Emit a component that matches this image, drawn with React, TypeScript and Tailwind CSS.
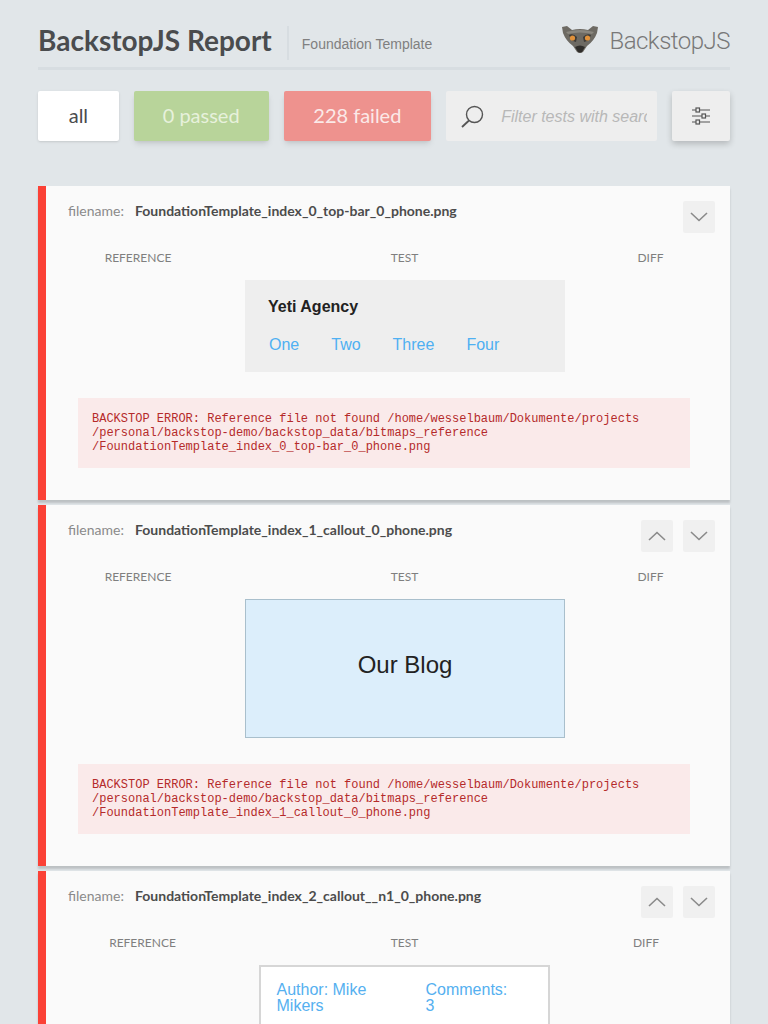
const lato = "font-['Lato','Noto_Sans',sans-serif]"

function Chevron({ up }: { up?: boolean }) {
  return (
    <svg width="18" height="10" viewBox="0 0 18 10" fill="none" stroke="#8a8a8a" strokeWidth="1.6">
      <path d={up ? "M1 9 L9 1.5 L17 9" : "M1 1 L9 8.5 L17 1"} />
    </svg>
  )
}

function NavButtons({ up }: { up?: boolean }) {
  return (
    <div className="flex gap-[10px]">
      {up && (
        <div className="flex h-[32px] w-[32px] items-center justify-center rounded-[2px] bg-[#f0f0f0]">
          <Chevron up />
        </div>
      )}
      <div className="flex h-[32px] w-[32px] items-center justify-center rounded-[2px] bg-[#f0f0f0]">
        <Chevron />
      </div>
    </div>
  )
}

function Lemur() {
  return (
    <svg width="38" height="28" viewBox="0 0 38 28">
      <path d="M1 1 L6 0 L11 4 Q19 2 27 4 L32 0 L37 1 L36 7 Q33 15 26 20 L22 26 Q19 28 16 26 L12 20 Q5 15 2 7 Z" fill="#6d6a63" />
      <path d="M5 6 Q19 2 33 6 L31 8 Q19 5 7 8 Z" fill="#8a877f" />
      <path d="M8 9 Q12 7 16 11 L15 16 Q10 15 8 9 Z" fill="#3d3b37" />
      <path d="M30 9 Q26 7 22 11 L23 16 Q28 15 30 9 Z" fill="#3d3b37" />
      <circle cx="11.5" cy="12" r="2.6" fill="#e0913a" />
      <circle cx="26.5" cy="12" r="2.6" fill="#e0913a" />
      <path d="M14 21 Q19 18 24 21 L21 26 Q19 27 17 26 Z" fill="#2f2d2a" />
    </svg>
  )
}

function Header() {
  return (
    <header className="flex h-[44px] items-start justify-between border-b-[3px] border-[#d7dde1]">
      <div className="flex items-start">
        <h1 className="-mt-[2px] text-[28px] leading-[32px] font-bold text-[#4a4c4e]">BackstopJS Report</h1>
        <div className="mr-[13px] ml-[15px] h-[34px] w-[2px] bg-[#d7dde1]" />
        <span className="mt-[8px] font-['Liberation_Sans',sans-serif] text-[14px] leading-[20px] text-[#808080]">Foundation Template</span>
      </div>
      <div className="flex items-start gap-[10px]">
        <Lemur />
        <span className="mt-[1px] font-['Roboto',sans-serif] text-[24px] leading-[28px] font-light tracking-[-0.5px] text-[#787878]">BackstopJS</span>
      </div>
    </header>
  )
}

function Toolbar() {
  return (
    <div className="mt-[21px] flex h-[50px] gap-[15px]">
      <div className="flex w-[81px] items-center justify-center rounded-[2px] bg-white pb-[2px] text-[20px] text-[#4a4c4e] shadow-sm">all</div>
      <div className="flex w-[135px] items-center justify-center rounded-[2px] bg-[#b8d49a] pb-[2px] text-[20px] text-[#e7f1dc] shadow-md">0 passed</div>
      <div className="flex w-[148px] items-center justify-center rounded-[2px] bg-[#ee928e] pb-[2px] text-[20px] text-[#fbe9e8] shadow-md">228 failed</div>
      <div className="flex w-[211px] items-center rounded-[2px] bg-[#eeeeee] pr-[10px] pl-[15px]">
        <svg width="23" height="23" viewBox="0 0 23 23" fill="none" stroke="#555555" strokeWidth="1.4" className="shrink-0">
          <circle cx="13.5" cy="9.5" r="8" />
          <path d="M8 15.5 L1 22" strokeWidth="1.8" />
        </svg>
        <span className="ml-[17px] overflow-hidden pt-[1px] font-['Liberation_Sans',sans-serif] text-[16px] whitespace-nowrap text-[#b8b8b8] italic">
          Filter tests with search
        </span>
      </div>
      <div className="flex w-[58px] items-center justify-center rounded-[2px] bg-[#eeeeee] shadow-[0_3px_6px_rgba(0,0,0,0.2)]">
        <svg width="18" height="18" viewBox="0 0 18 18" fill="none" stroke="#555555" strokeWidth="1.2">
          <path d="M0 3 H4 M8 3 H18 M0 9 H10 M14 9 H18 M0 15 H4 M8 15 H18" />
          <rect x="4" y="1" width="3.5" height="4" />
          <rect x="10" y="7" width="3.5" height="4" />
          <rect x="4" y="13" width="3.5" height="4" />
        </svg>
      </div>
    </div>
  )
}

function ErrorBox({ name }: { name: string }) {
  return (
    <div className="mt-[26px] mr-[40px] ml-[32px] bg-[#faeaea] px-[14px] py-[14px] font-['Liberation_Mono',monospace] text-[12px] leading-[14px] text-[#b52a2a]">
      BACKSTOP ERROR: Reference file not found /home/wesselbaum/Dokumente/projects
      <br />
      /personal/backstop-demo/backstop_data/bitmaps_reference
      <br />/{name}
    </div>
  )
}

function Card({
  name,
  up,
  columns,
  children,
}: {
  name: string
  up?: boolean
  columns: string
  children: React.ReactNode
}) {
  return (
    <section className="border-l-[8px] border-[#fb4136] bg-[#fafafa] pb-[32px] shadow-[0_3px_2px_rgba(0,0,0,0.16)]">
      <div className="flex items-start justify-between pt-[15px] pr-[15px] pl-[22px]">
        <div className="-mt-[1px] flex h-[20px] items-center text-[14px]">
          <span className="w-[67px] text-[#8a8a8a]">filename:</span>
          <span className="font-bold text-[#4c4c4c]">{name}</span>
        </div>
        <NavButtons up={up} />
      </div>
      <div className={`mt-[17px] grid text-center text-[12px] leading-[16px] text-[#7f7f7f] ${columns}`}>
        <div>REFERENCE</div>
        <div>TEST</div>
        <div>DIFF</div>
      </div>
      <div className="mt-[14px] ml-[199px] flex w-[320px] justify-center font-['Liberation_Sans',sans-serif]">{children}</div>
      <ErrorBox name={name} />
    </section>
  )
}

export default function App() {
  return (
    <div className={`h-screen overflow-hidden bg-[#e1e6e9] px-[38px] pt-[26px] ${lato}`}>
      <Header />
      <Toolbar />
      <main className="mt-[45px] flex flex-col gap-[5px]">
        <Card name="FoundationTemplate_index_0_top-bar_0_phone.png" columns="grid-cols-[184px_349px_143px]">
          <div className="h-[92px] w-[320px] bg-[#eeeeee] px-[24px] pt-[17px]">
            <div className="-ml-[1px] text-[16px] leading-[20px] font-bold text-[#222222]">Yeti Agency</div>
            <div className="mt-[18px] flex gap-[32px] text-[16px] leading-[20px] text-[#4fb0f2]">
              <span>One</span>
              <span>Two</span>
              <span>Three</span>
              <span>Four</span>
            </div>
          </div>
        </Card>
        <Card name="FoundationTemplate_index_1_callout_0_phone.png" up columns="grid-cols-[184px_349px_143px]">
          <div className="flex h-[139px] w-[320px] items-center justify-center border border-[#a9bfcc] bg-[#dceefb] pb-[8px] text-[24px] text-[#222222]">
            Our Blog
          </div>
        </Card>
        <Card name="FoundationTemplate_index_2_callout__n1_0_phone.png" up columns="grid-cols-[193px_331px_152px]">
          <div className="mr-[2px] flex h-[120px] w-[291px] border-2 border-[#d6d6d6] bg-white pt-[15px] pl-[16px] text-[16px] leading-[16px] text-[#55b0f0]">
            <div className="w-[149px] pr-[10px]">Author: Mike Mikers</div>
            <div className="w-[90px]">Comments: 3</div>
          </div>
        </Card>
      </main>
    </div>
  )
}
